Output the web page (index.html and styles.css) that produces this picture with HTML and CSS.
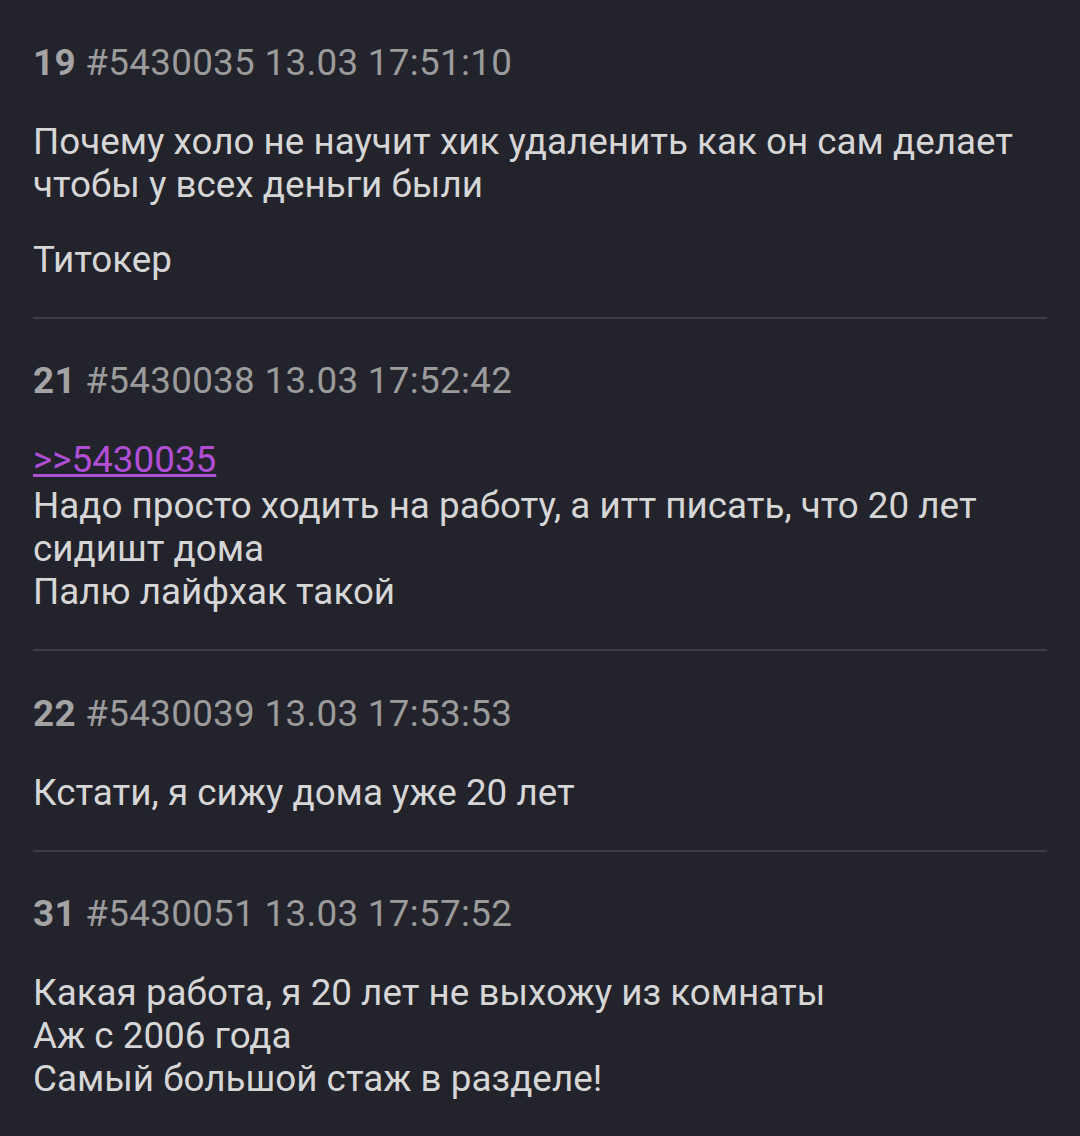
FILE: index.html
```html
<!doctype html>
<html lang="ru">
<head>
    <meta charset="UTF-8">
    <title>Тред</title>
    <link rel="stylesheet" href="styles.css">
</head>
<body>
    <div class="thread">
        <div class="post">
            <div class="post-head"><span class="num">19</span> #5430035 13.03 17:51:10</div>
            <div class="post-body">
                <p>Почему холо не научит хик удаленить как он сам делает чтобы у всех деньги были</p>
                <p>Титокер</p>
            </div>
        </div>

        <div class="post">
            <div class="post-head"><span class="num">21</span> #5430038 13.03 17:52:42</div>
            <div class="post-body">
                <p><a class="reply" href="#">&gt;&gt;5430035</a>Надо просто ходить на работу, а итт писать, что 20 лет сидишт дома<br>Палю лайфхак такой</p>
            </div>
        </div>

        <div class="post">
            <div class="post-head"><span class="num">22</span> #5430039 13.03 17:53:53</div>
            <div class="post-body">
                <p>Кстати, я сижу дома уже 20 лет</p>
            </div>
        </div>

        <div class="post">
            <div class="post-head"><span class="num">31</span> #5430051 13.03 17:57:52</div>
            <div class="post-body">
                <p>Какая работа, я 20 лет не выхожу из комнаты<br>Аж с 2006 года<br>Самый большой стаж в разделе!</p>
            </div>
        </div>
    </div>
</body>
</html>
```

FILE: styles.css
```css
body {
    margin: 0;
    background-color: #23232c;
    color: #d6d6d6;
    font-family: 'Roboto', sans-serif;
    font-size: 36.8px;
    line-height: 43px;
}
.thread {
    padding: 0 33px;
}
.post {
    padding: 40.5px 0 36px;
    border-bottom: 2px solid #3c3c46;
}
.post:last-child {
    border-bottom: none;
}
.post-head {
    color: #9b9b9b;
    letter-spacing: 0.3px;
    margin-bottom: 36px;
}
.post-head .num {
    font-weight: bold;
    color: #a4a4a4;
}
.post-body p {
    margin: 0 0 32px;
}
.post-body p:last-child {
    margin-bottom: 0;
}
.reply {
    display: block;
    width: max-content;
    margin-bottom: 3px;
    color: #b04fd6;
}
```
